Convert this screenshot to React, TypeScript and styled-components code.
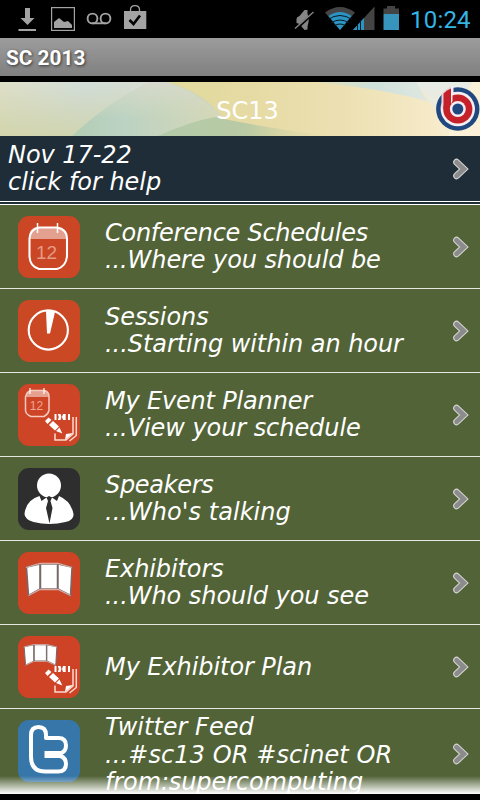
import React from 'react';
import styled, { createGlobalStyle } from 'styled-components';

const GlobalStyle = createGlobalStyle`
  * { box-sizing: border-box; }
  body { margin: 0; background: #000; overflow: hidden; }
`;

const Screen = styled.div`
  width: 480px;
  height: 800px;
  display: flex;
  flex-direction: column;
  overflow: hidden;
  background: #000;
  color: #fff;
  font-family: 'DejaVu Sans', sans-serif;
`;

const StatusBar = styled.header`
  height: 38px;
  flex: none;
  display: flex;
  justify-content: space-between;
`;

const StatusIcons = styled.svg`
  display: block;
  height: 38px;
`;

const StatusRight = styled.div`
  display: flex;
  padding-right: 9px;
`;

const Clock = styled.time`
  width: 62px;
  padding-left: 1px;
  font: 24px/40px Roboto, sans-serif;
  letter-spacing: 0.2px;
  color: #33b5e5;
  white-space: nowrap;
`;

const TitleBar = styled.h1`
  height: 38px;
  flex: none;
  margin: 0 0 6px;
  padding-left: 6px;
  font: bold 20.8px/40px Roboto, sans-serif;
  background: linear-gradient(#9c9c9c, #808080);
  text-shadow: 1px 1px 3px #333;
`;

const Banner = styled.div`
  height: 54px;
  flex: none;
  display: grid;
  grid-template: 54px / 480px;
`;

const BannerArt = styled.svg`
  grid-area: 1 / 1;
  display: block;
`;

const BannerTitle = styled.h2`
  grid-area: 1 / 1;
  margin: 0;
  padding-left: 15px;
  text-align: center;
  font-weight: 400;
  font-size: 24px;
  line-height: 58px;
  z-index: 1;
`;

const BannerLogo = styled.svg`
  grid-area: 1 / 1;
  justify-self: end;
  z-index: 1;
`;

const Content = styled.main`
  height: 658px;
  flex: none;
  overflow: hidden;
  display: grid;
  grid-template: 658px / 480px;
`;

const List = styled.div`
  grid-area: 1 / 1;
`;

const HelpRow = styled.div`
  height: 69px;
  display: flex;
  align-items: center;
  padding: 0 10px 3px 8px;
  background: linear-gradient(#fff, #fff) 0 65px / 100% 1px no-repeat, #1e2d37;
  border-bottom: 1px solid #fff;
`;

const Row = styled.div<{ $tall?: boolean }>`
  height: ${(p) => (p.$tall ? 92 : 84)}px;
  display: flex;
  align-items: ${(p) => (p.$tall ? 'flex-start' : 'center')};
  padding: ${(p) => (p.$tall ? '4px' : '0')} 10px 0 18px;
  background: #526337;
  border-bottom: ${(p) => (p.$tall ? '0' : '1px solid #e4e6df')};
`;

const Tile = styled.svg<{ $top?: number }>`
  flex: none;
  width: 62px;
  height: 62px;
  margin: ${(p) => p.$top ?? 0}px 25px 0 0;
`;

const Label = styled.div<{ $tall?: boolean; $spacing?: number }>`
  flex: 1;
  padding-top: 1px;
  font-size: 24px;
  line-height: ${(p) => (p.$tall ? 27.5 : 27)}px;
  font-style: italic;
  white-space: pre;
`;

const Line = styled.span<{ $spacing?: number }>`
  display: block;
  letter-spacing: ${(p) => p.$spacing ?? -0.05}px;
`;

const ChevronSvg = styled.svg<{ $top?: number }>`
  flex: none;
  margin-top: ${(p) => p.$top ?? 0}px;
`;

const Fade = styled.div`
  grid-area: 1 / 1;
  align-self: end;
  height: 18px;
  z-index: 1;
  background: linear-gradient(rgba(255, 255, 255, 0), #fff);
`;

const Chevron = ({ top }: { top?: number }) => (
  <ChevronSvg $top={top} width="18" height="22" viewBox="0 0 18 22" fill="none" strokeLinecap="round" strokeLinejoin="miter">
    <path d="M4.600 4.200 11.800 11l-7.200 6.800" stroke="#d6d6d6" strokeWidth="6.800" />
    <path d="M4.600 4.200 11.800 11l-7.200 6.800" stroke="#8b8b8b" strokeWidth="4.800" />
  </ChevronSvg>
);

const Base = ({ color }: { color: string }) => <rect width="62" height="62" rx="11" fill={color} />;

const Planner = () => (
  <g fill="#fff">
    <path d="M36.500 30h2v6h-2zM39.800 30h2.700l1 3-1 3h-2.700l1-3zM45 30h2.700v6H45l-1-3zM50 30h2v6h-2z" />
    <path d="m27 37 3.500-3.500 3 2.500-4 4zM31 41l4-4 6 5.500-4 4zM38 47l3.500-3.500 2.800 6z" />
    <path d="M37 49.500v6.500h11l7-6V33M58.300 33v18.500L51.500 57" fill="none" stroke="#fbd9d0" strokeWidth="1.500" />
    <path d="m47 56 1-6 7-1z" />
  </g>
);

const Calendar = () => (
  <g>
    <path d="M11.500 23V20q0-9 9-9h19q9 0 9 9v3z" fill="#e4a08f" />
    <path d="M21 11.500h18q10 2 10 11v18q-1 10-10 12.500H21q-9-2.500-9.500-12.500v-18q.5-9 9.500-11Z" fill="none" stroke="#fff" strokeWidth="2.100" />
    <path d="M19.500 7v10M39.500 7v10" stroke="#fff" strokeWidth="1.500" />
    <text x="28.500" y="42.500" textAnchor="middle" fontFamily="Liberation Sans, sans-serif" fontSize="19" fill="#e59a86">12</text>
  </g>
);

const SmallCalendar = () => (
  <g>
    <path d="M8 13q0-7 6-7h12q5 1 5 7z" fill="#e5a08f" />
    <path d="M13 6.500h13q5 1 5 6v14q-1 4-5 6H13q-5-2-5.500-6V13q1-5 5.500-6.500Z" fill="none" stroke="#f4cabe" strokeWidth="1.500" />
    <path d="M12 4v6M26 4v6" stroke="#fff" strokeWidth="1.200" />
    <text x="18.500" y="26" textAnchor="middle" fontFamily="Liberation Sans, sans-serif" fontSize="12" fill="#eea491">12</text>
  </g>
);

const Panels = () => (
  <g stroke="#77696a" strokeWidth="1.500">
    <path d="m8.500 15 13.500-3v25L10.500 43.500Z" fill="#fff" />
    <path d="M22.500 12h17v25h-17Z" fill="#fff" />
    <path d="m40 12 14 3-1.500 28.500L40 37Z" fill="#fff" />
    <path d="M8 15.500 22 11.500h18l14 4M10.500 43.500 22 37.500h18l12.500 6" fill="none" stroke="#d9aaa0" strokeWidth="1.300" />
  </g>
);

const icons: Record<string, React.ReactNode> = {
  calendar: <><Base color="#cb4624" /><Calendar /></>,
  sessions: (
    <>
      <Base color="#cb4825" />
      <circle cx="30.300" cy="30" r="19.600" fill="none" stroke="#fff" strokeWidth="2.100" />
      <path d="M28 11q5-1 9 1l-5 21.500h-3Z" fill="#fff" />
    </>
  ),
  planner: <><Base color="#cd4426" /><SmallCalendar /><Planner /></>,
  speaker: (
    <>
      <Base color="#2e2e2f" />
      <circle cx="31" cy="17.500" r="12" fill="#fff" />
      <path d="M6.500 46Q8 32 21.500 28l2 5 5-3.500 2.500 1.500 3-1.500 5 3.500 2-5Q53 33 55.500 46q.5 6-8 8-16 4-32 0-9-3-9-8Z" fill="#fff" />
      <path d="m28.500 29.500 2.500-1.500 3 1.500-1.500 3.500 2 7-3 15.500-3.500-15.500 2-7Z" fill="#2e2e2f" />
    </>
  ),
  exhibitors: <><Base color="#cf4325" /><Panels /></>,
  plan: (
    <>
      <Base color="#ce4226" />
      <g transform="translate(0 1) scale(.72 .65)"><Panels /></g>
      <Planner />
    </>
  ),
  twitter: (
    <>
      <Base color="#3776a8" />
      <path d="M13 15q0-8 7.500-8T28 15v3h12.500q7.500 0 7.500 7.500 0 6-5.500 7.800V36q5.500 2 5.500 8 0 7.500-8 7.500H27q-14 0-14-15Z" fill="none" stroke="#fff" strokeWidth="4" strokeLinejoin="round" />
      <path d="M26.500 31H44v7H26.500z" fill="#fff" />
    </>
  ),
};

type Line = { text: string; spacing?: number };
type Item = { icon: string; lines: Line[]; tall?: boolean };

const items: Item[] = [
  { icon: 'calendar', lines: [{ text: 'Conference Schedules', spacing: -0.26 }, { text: '...Where you should be', spacing: -0.09 }] },
  { icon: 'sessions', lines: [{ text: 'Sessions' }, { text: '...Starting within an hour' }] },
  { icon: 'planner', lines: [{ text: 'My Event Planner', spacing: -0.18 }, { text: '...View your schedule', spacing: -0.07 }] },
  { icon: 'speaker', lines: [{ text: 'Speakers', spacing: -0.3 }, { text: "...Who's talking", spacing: 0.05 }] },
  { icon: 'exhibitors', lines: [{ text: 'Exhibitors', spacing: -0.1 }, { text: '...Who should you see' }] },
  { icon: 'plan', lines: [{ text: 'My Exhibitor Plan', spacing: -0.07 }] },
  { icon: 'twitter', lines: [{ text: 'Twitter Feed', spacing: 0 }, { text: '...#sc13 OR #scinet OR', spacing: 0.1 }, { text: 'from:supercomputing', spacing: -0.12 }], tall: true },
];

const Notifications = () => (
  <StatusIcons width="150" viewBox="0 0 150 38" fill="none" stroke="#a3a3a3">
    <path d="M25 8h5v10h4.500l-7 7-7-7H25zM18.500 29H36v2H18.500z" fill="#a3a3a3" stroke="none" />
    <rect x="51.600" y="7.600" width="22.800" height="22.800" strokeWidth="1.200" />
    <path d="M54 28v-6l5-4 5 4 4-1 4 4v3z" fill="#a3a3a3" stroke="none" />
    <circle cx="92.500" cy="18.500" r="4.900" strokeWidth="1.900" />
    <circle cx="105.500" cy="18.500" r="4.900" strokeWidth="1.900" />
    <path d="M92 23.300h14" strokeWidth="1.900" />
    <path d="M124 11h22.300v18H124z" fill="#a3a3a3" stroke="none" />
    <path d="M130.500 12v-2q0-4.300 4.500-4.300t4.500 4.300v2" strokeWidth="1.300" />
    <path d="m129.500 20 4 4L140 15.500" stroke="#000" strokeWidth="2.600" />
  </StatusIcons>
);

const SystemIcons = () => (
  <StatusIcons width="116" viewBox="293 0 116 38" fill="none">
    <path d="M296.500 19q0-2 3-3l5-6h3v19.500l-3 .5-5-6-3-1z" fill="#858585" />
    <path d="M305 12.500q5 7 0 16" stroke="#858585" strokeWidth="2.500" />
    <path d="m295.500 29.500 18-16.500" stroke="#000" strokeWidth="2.500" />
    <path d="m295 28.500 18.500-16.500" stroke="#858585" strokeWidth="1.400" />
    <path d="M340 30 325 12.500q15-11 30 0z" fill="#444" />
    <path d="M340 30 328.500 16q11.500-8 23 0z" fill="#2b94c2" />
    <path d="M328 19.500q12-8 24 0M331 23q9-6 18 0M334 26q6-4 12 0" stroke="#071820" strokeWidth="1" />
    <path d="M374.500 6.500V30H353z" fill="#444" />
    <path d="M364 18v12h-11z" fill="#2b94c2" />
    <path d="M357.500 24v6M360.500 20v10" stroke="#061b25" strokeWidth="1" />
    <path d="M387 6h8v2.500h4V14h-15.500V8.500h3.500z" fill="#444" />
    <path d="M383.500 14h15.500v16h-15.500z" fill="#3795bd" />
  </StatusIcons>
);

const Header = () => (
  <Banner>
    <BannerArt width="480" height="54" viewBox="0 0 480 54">
      <defs>
        <linearGradient id="left">
          <stop stopColor="#dfdfc9" /><stop offset=".42" stopColor="#d2ddd9" /><stop offset=".8" stopColor="#d8ddd0" /><stop offset="1" stopColor="#e5daa6" />
        </linearGradient>
        <linearGradient id="right">
          <stop stopColor="#dfd99a" /><stop offset=".35" stopColor="#e7dba6" /><stop offset=".65" stopColor="#eee2b7" /><stop offset="1" stopColor="#fbf0d5" />
        </linearGradient>
        <linearGradient id="leaf">
          <stop stopColor="#b3cdb4" /><stop offset=".3" stopColor="#bbd2c3" /><stop offset="1" stopColor="#d9d8b5" />
        </linearGradient>
        <linearGradient id="low" x2="0" y2="1">
          <stop stopColor="#c9cf9e" stopOpacity="0" /><stop offset="1" stopColor="#cfd2a4" stopOpacity=".75" />
        </linearGradient>
        <linearGradient id="sky">
          <stop stopColor="#e0dfb4" /><stop offset=".5" stopColor="#cfe0d9" /><stop offset="1" stopColor="#dfe8e2" />
        </linearGradient>
        <linearGradient id="upper" x2="0" y2="1">
          <stop stopColor="#d7d9cd" stopOpacity=".95" /><stop offset="1" stopColor="#d5dbc0" stopOpacity="0" />
        </linearGradient>
        <linearGradient id="green">
          <stop stopColor="#b3cbab" /><stop offset=".5" stopColor="#b9caa4" /><stop offset="1" stopColor="#e7dba6" stopOpacity="0" />
        </linearGradient>
        <linearGradient id="pale" x2="0" y2="1">
          <stop stopColor="#e6ebe6" /><stop offset="1" stopColor="#f6ecd0" />
        </linearGradient>
      </defs>
      <path d="M0 0h200v54H0z" fill="url(#left)" />
      <path d="M0 0h130v54H0z" fill="url(#low)" />
      <path d="M150 0h330v54H150z" fill="url(#right)" />
      <path d="M72 54Q108 20 150 0h17q52 15 66 54z" fill="url(#leaf)" />
      <path d="M95 33Q120 15 150 0h17q36 12 54 36-60 4-126-3z" fill="url(#upper)" />
      <path d="M158 54q30-14 57-19 54 12 120 19z" fill="url(#green)" />
      <path d="M315 0h105q-2 10 10 20Q385 7 315 0z" fill="url(#sky)" />
      <path d="M416 0h56l8 30v24h-32q-13-30-32-54z" fill="url(#pale)" />
      <path d="M448 54 472 0h8v54z" fill="#fbf0d8" />
    </BannerArt>
    <BannerTitle>SC13</BannerTitle>
    <BannerLogo width="46" height="54" viewBox="434 82 46 54">
      <circle cx="457.800" cy="109" r="21.700" fill="#1f4780" />
      <circle cx="457.800" cy="109" r="17.200" fill="#f4eef0" />
      <path d="M441.500 94 445 90l7.500-4.500V99l-11 10z" fill="#e6d5dc" />
      <path d="M451 86h2.500v12H451z" fill="#f4eef0" />
      <circle cx="457.800" cy="109" r="14.600" fill="#c4212a" />
      <path d="M443.500 93.500 447 90.500l4-2V109h-7.500z" fill="#c4212a" />
      <circle cx="457.800" cy="109" r="8" fill="#f4eef0" />
      <path d="M451 91h1.500v10l-1.500 3z" fill="#f4eef0" />
      <circle cx="457.800" cy="109" r="5.500" fill="#1f4780" />
    </BannerLogo>
  </Banner>
);

export default function App() {
  return (
    <>
      <GlobalStyle />
      <Screen>
        <StatusBar>
          <Notifications />
          <StatusRight><SystemIcons /><Clock>10:24</Clock></StatusRight>
        </StatusBar>
        <TitleBar>SC 2013</TitleBar>
        <Header />
        <Content>
          <List>
            <HelpRow>
              <Label>
                <Line>Nov 17-22</Line>
                <Line>click for help</Line>
              </Label>
              <Chevron />
            </HelpRow>
            {items.map((item) => (
              <Row key={item.icon} $tall={item.tall}>
                <Tile viewBox="0 0 62 62" $top={item.tall ? 7 : 0}>{icons[item.icon]}</Tile>
                <Label $tall={item.tall}>
                  {item.lines.map((line) => (
                    <Line key={line.text} $spacing={line.spacing}>{line.text}</Line>
                  ))}
                </Label>
                <Chevron top={item.tall ? 30 : 0} />
              </Row>
            ))}
          </List>
          <Fade />
        </Content>
      </Screen>
    </>
  );
}
